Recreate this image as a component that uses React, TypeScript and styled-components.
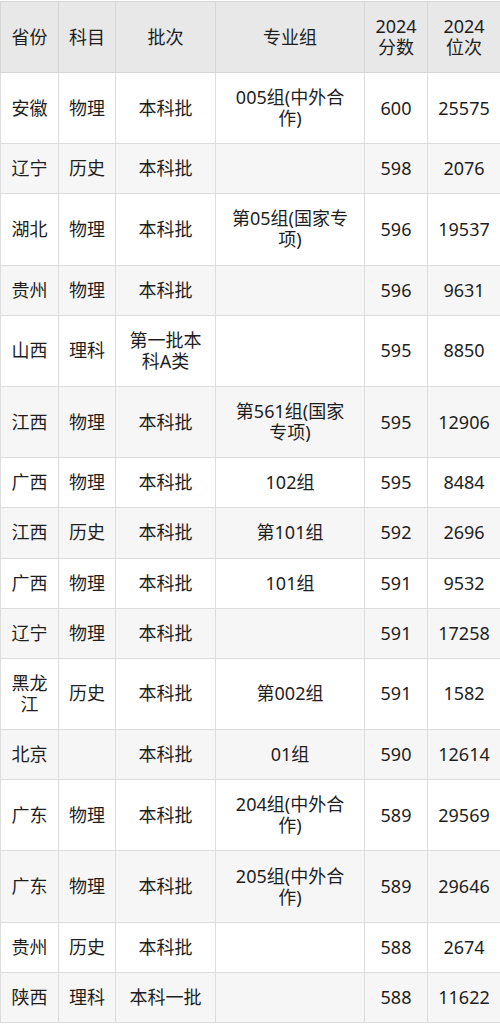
import React from "react";
import styled, { createGlobalStyle } from "styled-components";

// 数据
interface Row {
  province: string;
  subject: string;
  batch: string;
  group: string;
  score: string;
  rank: string;
}

const rows: Row[] = [
  { province: "安徽", subject: "物理", batch: "本科批", group: "005组(中外合\n作)", score: "600", rank: "25575" },
  { province: "辽宁", subject: "历史", batch: "本科批", group: "", score: "598", rank: "2076" },
  { province: "湖北", subject: "物理", batch: "本科批", group: "第05组(国家专\n项)", score: "596", rank: "19537" },
  { province: "贵州", subject: "物理", batch: "本科批", group: "", score: "596", rank: "9631" },
  { province: "山西", subject: "理科", batch: "第一批本\n科A类", group: "", score: "595", rank: "8850" },
  { province: "江西", subject: "物理", batch: "本科批", group: "第561组(国家\n专项)", score: "595", rank: "12906" },
  { province: "广西", subject: "物理", batch: "本科批", group: "102组", score: "595", rank: "8484" },
  { province: "江西", subject: "历史", batch: "本科批", group: "第101组", score: "592", rank: "2696" },
  { province: "广西", subject: "物理", batch: "本科批", group: "101组", score: "591", rank: "9532" },
  { province: "辽宁", subject: "物理", batch: "本科批", group: "", score: "591", rank: "17258" },
  { province: "黑龙\n江", subject: "历史", batch: "本科批", group: "第002组", score: "591", rank: "1582" },
  { province: "北京", subject: "", batch: "本科批", group: "01组", score: "590", rank: "12614" },
  { province: "广东", subject: "物理", batch: "本科批", group: "204组(中外合\n作)", score: "589", rank: "29569" },
  { province: "广东", subject: "物理", batch: "本科批", group: "205组(中外合\n作)", score: "589", rank: "29646" },
  { province: "贵州", subject: "历史", batch: "本科批", group: "", score: "588", rank: "2674" },
  { province: "陕西", subject: "理科", batch: "本科一批", group: "", score: "588", rank: "11622" },
];

const widths = [58, 57, 100, 149, 63, 73];
const headers = ["省份", "科目", "批次", "专业组", "2024\n分数", "2024\n位次"];

const App: React.FC = () => {
  return (
    <>
      <GlobalStyle />
      <Table>
        <colgroup>
          {widths.map((w, i) => (
            <col key={i} style={{ width: w }} />
          ))}
        </colgroup>
        <thead>
          <tr>
            {headers.map((h, i) => (
              <Th key={i}>{h}</Th>
            ))}
          </tr>
        </thead>
        <tbody>
          {rows.map((r, i) => (
            <Tr key={i} $striped={i % 2 === 1}>
              <Td>{r.province}</Td>
              <Td>{r.subject}</Td>
              <Td>{r.batch}</Td>
              <Td>{r.group}</Td>
              <Td>{r.score}</Td>
              <Td>{r.rank}</Td>
            </Tr>
          ))}
        </tbody>
      </Table>
    </>
  );
};

const GlobalStyle = createGlobalStyle`
  body {
    margin: 0;
    background: #ffffff;
    font-family: "Noto Sans", "Noto Sans CJK SC", sans-serif;
    color: #222;
  }
`;

const Table = styled.table`
  width: 499px;
  margin-top: 1px;
  table-layout: fixed;
  border-collapse: collapse;
  border: 1px solid #d9d9d9;
  font-size: 18px;
  line-height: 21px;
`;

const Th = styled.th`
  background: #e8e8e8;
  font-weight: 400;
  border: 1px solid #d6d6d6;
  padding: 14px 2px;
  text-align: center;
  white-space: pre-line;
  color: #1e1e1e;
`;

const Tr = styled.tr<{ $striped: boolean }>`
  background: ${(p) => (p.$striped ? "#f6f6f6" : "#ffffff")};
`;

const Td = styled.td`
  border: 1px solid #dcdcdc;
  padding: 14.1px 2px;
  text-align: center;
  vertical-align: middle;
  white-space: pre-line;
  color: #1e1e1e;
`;

export default App;
